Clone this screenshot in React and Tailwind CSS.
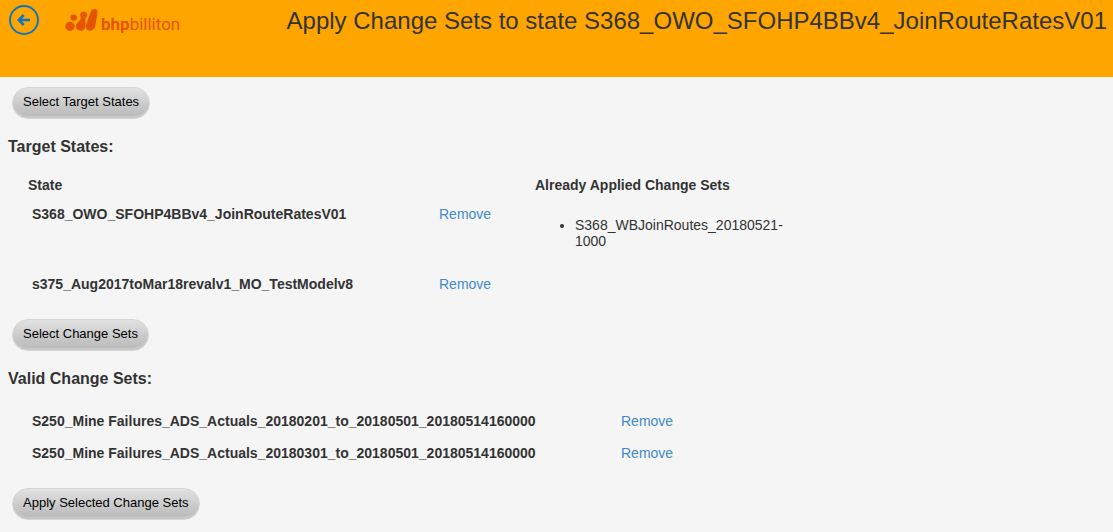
const targetStates = [
  {
    name: "S368_OWO_SFOHP4BBv4_JoinRouteRatesV01",
    applied: ["S368_WBJoinRoutes_20180521-1000"],
  },
  { name: "s375_Aug2017toMar18revalv1_MO_TestModelv8", applied: [] },
];

const changeSets = [
  "S250_Mine Failures_ADS_Actuals_20180201_to_20180501_20180514160000",
  "S250_Mine Failures_ADS_Actuals_20180301_to_20180501_20180514160000",
];

function PillButton({ children }) {
  return (
    <button
      type="button"
      className="h-8 rounded-full border border-[#d6d6d6] bg-linear-to-b from-[#e2e2e2] via-[#cccccc] to-[#b8b8b8] px-2.5 pb-0.5 text-[13px] leading-4 text-black shadow-[inset_0_-2px_1px_#c8c8c8]"
    >
      {children}
    </button>
  );
}

function RemoveLink({ item }) {
  return (
    <a href="#remove" aria-label={`Remove ${item}`} className="text-[#428bca] hover:underline">
      Remove
    </a>
  );
}

function Logo() {
  return (
    <div className="flex items-start text-[#e65400]">
      <svg width="34" height="24" viewBox="0 0 34 24" fill="currentColor" aria-hidden="true">
        <circle cx="5" cy="18.300" r="4.600" />
        <circle cx="8.700" cy="9.600" r="3.200" />
        <path d="M18.700 3.400c2 0 3.500 1.500 3.500 3.400 0 2.500-1.900 3.200-1.900 5.200 0 1.700.3 3.200.3 5.800 0 3-2.200 5-4.900 5s-4.900-2.100-4.900-4.700c0-3.800 4.200-4.200 4.800-7.200.3-1.600-.4-2.700-.4-4.100 0-1.900 1.600-3.400 3.500-3.400z" />
        <path d="M29.500.9c2 0 3.400 1.600 3.100 3.600l-2.300 13.600c-.5 2.900-2.500 4.700-5.100 4.700-2.800 0-4.700-2.200-4.300-5 .2-1.300.7-2.300 1.100-3.500l4-11.100c.6-1.500 1.800-2.300 3.500-2.300z" />
      </svg>
      <span className="pt-1.5 pl-0.5 font-['Roboto',sans-serif] text-[17px] leading-5 font-normal">
        <span className="font-bold">bhp</span>billiton
      </span>
    </div>
  );
}

export default function App() {
  return (
    <div className="min-h-screen bg-[#f5f5f5] font-['Liberation_Sans',Arial,sans-serif] text-sm leading-4 text-[#333]">
      <header className="flex h-[77px] items-start bg-[#ffa500] pr-1.5 pl-2">
        <button type="button" aria-label="Back" className="mt-1 shrink-0">
          <svg width="32" height="32" viewBox="0 0 32 32" fill="none" stroke="#0f77bd">
            <circle cx="16" cy="16" r="14" strokeWidth="2" />
            <path d="M22 16H10.500M15.800 11l-5 5 5 5" strokeWidth="2.600" />
          </svg>
        </button>
        <div className="mt-2 ml-[25px] shrink-0">
          <Logo />
        </div>
        <h1 className="mt-[7px] ml-auto text-2xl leading-7 whitespace-nowrap">
          Apply Change Sets to state S368_OWO_SFOHP4BBv4_JoinRouteRatesV01
        </h1>
      </header>

      <main className="px-2 pt-2.5 pb-3">
        <div className="pl-1">
          <PillButton>Select Target States</PillButton>
        </div>
        <h2 className="mt-4 text-base leading-6 font-bold">Target States:</h2>

        <table className="mt-[18px] ml-5 text-left">
          <thead>
            <tr className="h-[29px] align-top">
              <th className="w-[411px] font-bold">State</th>
              <th className="w-24" aria-label="Action" />
              <th className="w-[260px] font-bold">Already Applied Change Sets</th>
            </tr>
          </thead>
          <tbody>
            {targetStates.map((state) => (
              <tr key={state.name} className="h-[70px] align-top last:h-6">
                <td className="pl-1 font-bold">{state.name}</td>
                <td>
                  <RemoveLink item={state.name} />
                </td>
                <td>
                  {state.applied.length > 0 && (
                    <ul className="mt-[11px] list-disc pl-10">
                      {state.applied.map((set) => (
                        <li key={set}>{set}</li>
                      ))}
                    </ul>
                  )}
                </td>
              </tr>
            ))}
          </tbody>
        </table>

        <div className="mt-[19px] pl-1">
          <PillButton>Select Change Sets</PillButton>
        </div>
        <h2 className="mt-4 text-base leading-6 font-bold">Valid Change Sets:</h2>

        <table className="mt-[22px] ml-5 text-left">
          <tbody>
            {changeSets.map((set) => (
              <tr key={set} className="h-8 align-top">
                <td className="w-[593px] pl-1 font-bold">{set}</td>
                <td>
                  <RemoveLink item={set} />
                </td>
              </tr>
            ))}
          </tbody>
        </table>

        <div className="mt-[11px] pl-1">
          <PillButton>Apply Selected Change Sets</PillButton>
        </div>
      </main>
    </div>
  );
}
